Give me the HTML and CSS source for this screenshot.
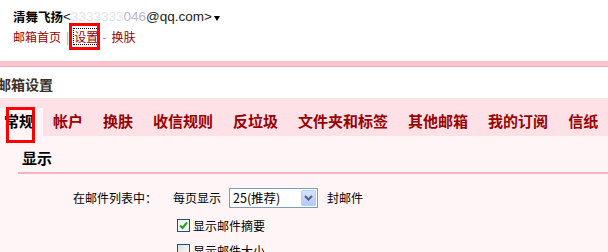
FILE: index.html
```html
<!DOCTYPE html>
<html lang="zh-CN">
<head>
<meta charset="utf-8">
<title>邮箱设置</title>
<link rel="stylesheet" href="styles.css">
</head>
<body>
<div class="page">
  <header class="top">
    <div class="user"><b class="name">清舞飞扬</b><span class="email">&lt;<span class="mask">3333333</span><span class="mask2">046</span>@qq.com&gt;</span><span class="caret"></span></div>
    <div class="links"><a class="link">邮箱首页</a><span class="sep">|</span><a class="link focus">设置</a><span class="dash">-</span><a class="link">换肤</a></div>
  </header>
  <div class="band"></div>
  <h1 class="title">邮箱设置</h1>
  <nav class="tabs">
    <span class="tab active">常规</span>
    <span class="tab">帐户</span>
    <span class="tab">换肤</span>
    <span class="tab">收信规则</span>
    <span class="tab">反垃圾</span>
    <span class="tab">文件夹和标签</span>
    <span class="tab">其他邮箱</span>
    <span class="tab">我的订阅</span>
    <span class="tab">信纸</span>
  </nav>
  <main class="content">
    <h2 class="sec">显示</h2>
    <div class="row">
      <span class="label">在邮件列表中：</span>
      <span class="txt">每页显示</span>
      <span class="select"><span class="sel-val">25(推荐)</span><span class="sel-btn"><svg width="9" height="6" viewBox="0 0 9 6"><path d="M1 1 L4.5 4.5 L8 1" fill="none" stroke="#4d6185" stroke-width="2"/></svg></span></span>
      <span class="txt after">封邮件</span>
    </div>
    <div class="check-row first"><span class="cb checked"><svg width="11" height="11" viewBox="0 0 11 11"><path d="M2 5.5 L4.5 8 L9 2.5" fill="none" stroke="#21a121" stroke-width="2"/></svg></span><span class="cb-label">显示邮件摘要</span></div>
    <div class="check-row"><span class="cb"></span><span class="cb-label">显示邮件大小</span></div>
  </main>
  <div class="mark mark-set"></div>
  <div class="mark mark-tab"></div>
</div>
</body>
</html>
```
FILE: styles.css
```css
html, body {
  margin: 0;
  padding: 0;
  background: #fff;
}
.page {
  position: relative;
  width: 608px;
  height: 252px;
  overflow: hidden;
  font-family: "Liberation Sans", "Noto Sans CJK SC", sans-serif;
  font-size: 12px;
  color: #000;
}
.top {
  padding: 10px 0 0 13px;
  box-sizing: border-box;
  height: 61px;
}
.user {
  height: 14px;
  line-height: 14px;
  display: flex;
  align-items: center;
}
.name {
  font-family: "Noto Sans CJK SC", sans-serif;
  font-size: 12.5px;
  font-weight: bold;
}
.email {
  font-family: "Liberation Sans", sans-serif;
  font-size: 13.5px;
  color: #222;
}
.mask {
  color: #e4e4ee;
}
.mask2 {
  color: #b8b8c8;
}
.caret {
  width: 0;
  height: 0;
  border-left: 3px solid transparent;
  border-right: 3px solid transparent;
  border-top: 5px solid #000;
  margin-left: 2px;
  margin-top: 2px;
}
.links {
  margin-top: 5px;
  height: 15px;
  line-height: 15px;
  display: flex;
  align-items: center;
  font-family: "Noto Sans CJK SC", sans-serif;
}
.link {
  color: #990000;
}
.sep {
  color: #999;
  margin: 0 5px 0 5px;
}
.focus {
  outline: 1px dotted #000;
  outline-offset: 0;
}
.dash {
  color: #888;
  margin: 0 5px 0 4px;
}
.band {
  height: 5px;
  background: #fbc4cf;
  border-bottom: 1px solid #f3aabb;
}
.title {
  margin: 9px 0 6px -3px;
  font-family: "Noto Sans CJK SC", sans-serif;
  font-size: 14px;
  font-weight: bold;
  line-height: 16px;
  color: #3a3028;
}
.tabs {
  display: flex;
  height: 38px;
  background: #fde1e6;
  box-sizing: border-box;
  padding-top: 10px;
}
.tab {
  height: 28px;
  line-height: 25px;
  padding: 0 10px;
  font-family: "Noto Sans CJK SC", sans-serif;
  font-size: 15px;
  font-weight: bold;
  color: #990000;
  white-space: nowrap;
}
.tab.active {
  background: #fff5f7;
  color: #000;
  padding: 0 9px 0 4px;
}
.content {
  background: #fff5f7;
  padding-top: 12px;
  height: 200px;
  font-family: "Noto Sans CJK SC", sans-serif;
}
.sec {
  margin: 0 0 0 18px;
  padding: 0 0 4px 4px;
  font-size: 15px;
  font-weight: bold;
  line-height: 20px;
  border-bottom: 2px solid #f5b3c6;
}
.row {
  display: flex;
  align-items: center;
  height: 20px;
  margin-top: 14px;
  line-height: 14px;
}
.label {
  width: 157px;
  text-align: right;
  margin-right: 16px;
  flex: none;
}
.select {
  display: flex;
  align-items: center;
  justify-content: space-between;
  width: 89px;
  height: 20px;
  box-sizing: border-box;
  border: 1px solid #7f9db9;
  background: #fff;
  margin-left: 8px;
}
.sel-val {
  padding-left: 3px;
  font-size: 12.5px;
  color: #000;
}
.sel-btn {
  width: 15px;
  height: 16px;
  margin-right: 1px;
  box-sizing: border-box;
  border: 1px solid #b9cdf6;
  border-radius: 2px;
  background: linear-gradient(#d5e2fd, #b3c9f7);
  display: flex;
  align-items: center;
  justify-content: center;
}
.after {
  margin-left: 9px;
}
.check-row {
  display: flex;
  align-items: center;
  height: 14px;
  margin-top: 11px;
  padding-left: 177px;
}
.check-row.first {
  margin-top: 10px;
}
.cb {
  width: 13px;
  height: 13px;
  box-sizing: border-box;
  border: 1px solid #1c5180;
  background: linear-gradient(135deg, #dcdcd7, #fff);
  display: flex;
  align-items: center;
  justify-content: center;
  flex: none;
}
.cb.checked {
  background: #f4f4f0;
}
.cb-label {
  margin-left: 3px;
}
.mark {
  position: absolute;
  box-sizing: border-box;
  border: 3px solid #ff0000;
}
.mark-set {
  left: 69px;
  top: 23px;
  width: 31px;
  height: 27px;
}
.mark-tab {
  left: 6px;
  top: 107px;
  width: 29px;
  height: 36px;
}
```
